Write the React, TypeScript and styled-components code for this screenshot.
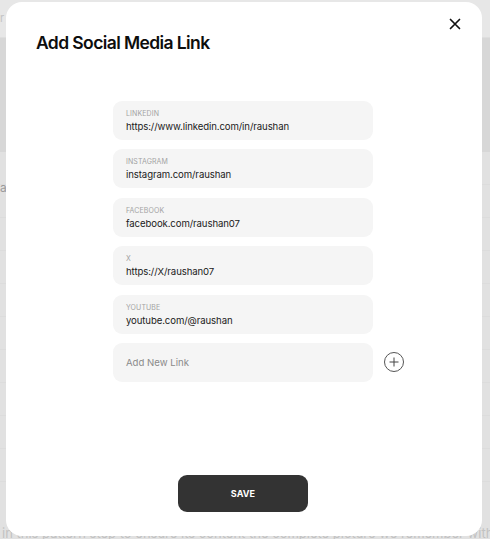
import styled, { createGlobalStyle } from "styled-components";

type Link = {
  label: string;
  value: string;
};

const links: Link[] = [
  { label: "LINKEDIN", value: "https://www.linkedin.com/in/raushan" },
  { label: "INSTAGRAM", value: "instagram.com/raushan" },
  { label: "FACEBOOK", value: "facebook.com/raushan07" },
  { label: "X", value: "https://X/raushan07" },
  { label: "YOUTUBE", value: "youtube.com/@raushan" },
];

export default function App(): JSX.Element {
  return (
    <>
      <GlobalStyle />
      <StyledPage>
        <StyledTopBar>
          <StyledFaint>r</StyledFaint>
        </StyledTopBar>
        <StyledBand />
        <StyledRows>
          {[0, 1, 2, 3, 4, 5, 6, 7, 8, 9].map((i) => (
            <StyledRow key={i}>{i === 0 ? "a" : ""}</StyledRow>
          ))}
        </StyledRows>
        <StyledFooterText>
          in this pattern step to ensure its content the complete picture we remember with
        </StyledFooterText>
      </StyledPage>

      <StyledOverlay>
        <StyledModal>
          <StyledClose aria-label="Close">
            <svg width="12" height="12" viewBox="0 0 12 12">
              <path
                d="M1.5 1.5 L10.5 10.5 M10.5 1.5 L1.5 10.5"
                stroke="#111"
                strokeWidth="1.7"
                strokeLinecap="round"
              />
            </svg>
          </StyledClose>
          <StyledTitle>Add Social Media Link</StyledTitle>

          <StyledList>
            {links.map((link) => (
              <StyledField key={link.label}>
                <StyledLabel>{link.label}</StyledLabel>
                <StyledValue>{link.value}</StyledValue>
              </StyledField>
            ))}
            <StyledField $placeholder>
              <StyledPlaceholder>Add New Link</StyledPlaceholder>
            </StyledField>
            <StyledAdd aria-label="Add link">
              <svg width="22" height="22" viewBox="0 0 22 22">
                <circle cx="11" cy="11" r="9.5" fill="none" stroke="#555" strokeWidth="1" />
                <path d="M11 6.5 V15.5 M6.5 11 H15.5" stroke="#444" strokeWidth="1" />
              </svg>
            </StyledAdd>
          </StyledList>

          <StyledSave>SAVE</StyledSave>
        </StyledModal>
      </StyledOverlay>
    </>
  );
}

const GlobalStyle = createGlobalStyle`
  * {
    box-sizing: border-box;
  }

  body {
    margin: 0;
    background: #e1e1e1;
    font-family: Inter, "Liberation Sans", sans-serif;
    overflow: hidden;
  }
`;

const StyledPage = styled.div`
  height: 539px;
  display: flex;
  flex-direction: column;
  background: #e1e1e1;
`;

const StyledTopBar = styled.div`
  height: 38px;
  background: #e7e7e7;
  border-bottom: 1px solid #dedede;
  padding-top: 6px;
`;

const StyledFaint = styled.span`
  font-size: 11px;
  color: #c4c4c4;
`;

const StyledBand = styled.div`
  height: 114px;
  background: #d7d7d7;
`;

const StyledRows = styled.div`
  flex: 1;
  display: flex;
  flex-direction: column;
`;

const StyledRow = styled.div`
  height: 33px;
  border-bottom: 1px solid #dcdcdc;
  font-size: 12px;
  color: #9a9a9a;
  padding-top: 28px;
`;

const StyledFooterText = styled.div`
  font-size: 13px;
  color: #c2c2c2;
  white-space: nowrap;
  padding: 0 0 0 2px;
  margin-bottom: -2px;
`;

const StyledOverlay = styled.div`
  position: fixed;
  inset: 0;
  display: flex;
  align-items: flex-start;
  justify-content: flex-start;
  padding: 2px 0 0 6px;
`;

const StyledModal = styled.div`
  position: relative;
  width: 476px;
  height: 534px;
  background: #ffffff;
  border-radius: 16px;
  padding: 29px 32px 24px 30px;
  display: flex;
  flex-direction: column;
`;

const StyledClose = styled.button`
  position: absolute;
  top: 15px;
  right: 20px;
  width: 14px;
  height: 14px;
  padding: 0;
  border: none;
  background: transparent;
  display: flex;
  align-items: center;
  justify-content: center;
  cursor: pointer;
`;

const StyledTitle = styled.h2`
  margin: 0;
  font-size: 17.5px;
  line-height: 24px;
  font-weight: 600;
  letter-spacing: -0.6px;
  color: #0d0d0d;
`;

const StyledList = styled.div`
  margin-top: 46px;
  display: grid;
  grid-template-columns: 1fr 260px 1fr;
  row-gap: 9.4px;
  align-items: center;

  & > div {
    grid-column: 2;
  }
`;

const StyledField = styled.div<{ $placeholder?: boolean }>`
  height: 39px;
  background: #f5f5f5;
  border-radius: 9px;
  padding: 0 13px;
  display: flex;
  flex-direction: column;
  gap: 1px;
  justify-content: ${(p) => (p.$placeholder ? "center" : "flex-start")};
  padding-top: ${(p) => (p.$placeholder ? "0" : "8px")};
`;

const StyledLabel = styled.span`
  font-size: 7px;
  line-height: 10px;
  color: #a3a3a3;
  letter-spacing: 0.1px;
`;

const StyledValue = styled.span`
  font-size: 9.6px;
  line-height: 14px;
  color: #1a1a1a;
  letter-spacing: -0.1px;
`;

const StyledPlaceholder = styled.span`
  font-size: 9.6px;
  color: #8a8a8a;
`;

const StyledAdd = styled.button`
  grid-column: 3;
  justify-self: start;
  margin-left: 10px;
  width: 22px;
  height: 22px;
  padding: 0;
  border: none;
  background: transparent;
  display: flex;
  cursor: pointer;
`;

const StyledSave = styled.button`
  margin: auto auto 0 auto;
  width: 130px;
  height: 37px;
  border: none;
  border-radius: 9px;
  background: #333333;
  color: #ffffff;
  font-family: Inter, "Liberation Sans", sans-serif;
  font-size: 9px;
  font-weight: 700;
  letter-spacing: 0.1px;
  cursor: pointer;
`;
